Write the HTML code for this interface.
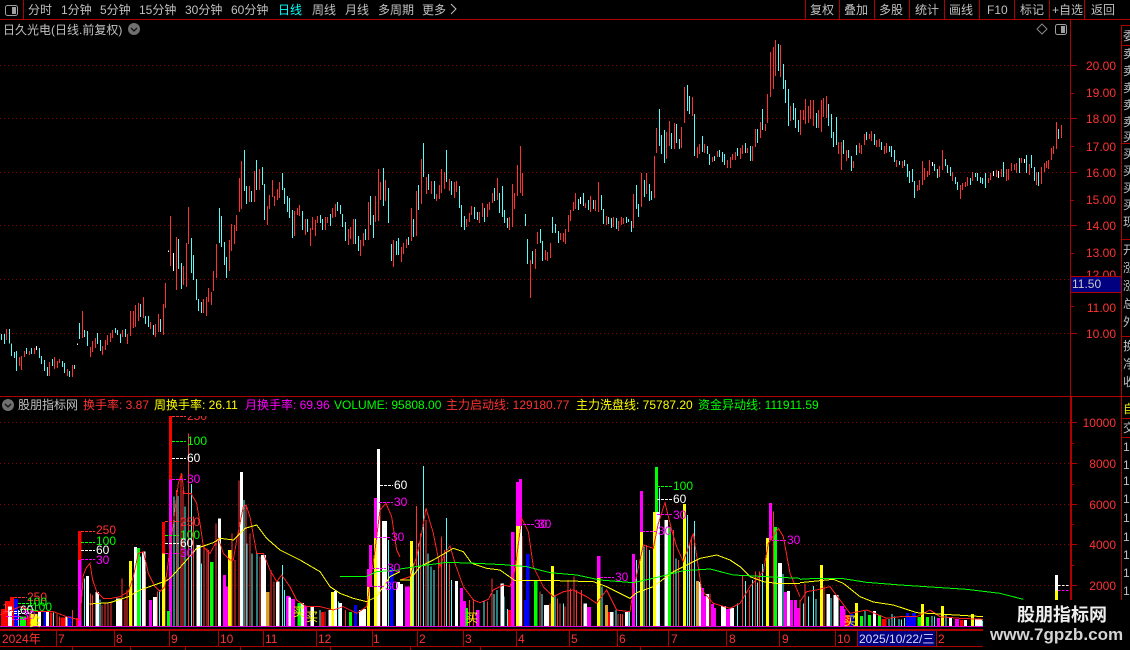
<!DOCTYPE html>
<html><head><meta charset="utf-8"><style>
html,body{margin:0;padding:0;background:#000;width:1130px;height:650px;overflow:hidden}
svg{display:block}
text{font-family:"Liberation Sans","WenQuanYi Zen Hei","Noto Sans CJK SC",sans-serif;font-size:12px;white-space:pre}
.c{shape-rendering:crispEdges}
.l{stroke:#b00000;stroke-width:1;fill:none}
.g{stroke:#8a0000;stroke-width:1;stroke-dasharray:1 3;fill:none}
.t{fill:#c0c0c0}
.ax{fill:#ff3232;text-anchor:end}
.rc{stroke:#ff3232;stroke-width:3;fill:none}
.cc{stroke:#54fcfc;stroke-width:3;fill:none}
.wc{stroke:#fff;stroke-width:3;fill:none}
.cv{fill:none;stroke-width:3}
</style></head><body>
<svg width="1130" height="650" viewBox="0 0 1130 650" xmlns="http://www.w3.org/2000/svg">
<rect width="1130" height="650" fill="#000"/>
<!-- toolbar -->
<g class="t">
<text x="28" y="14">分时</text><text x="61" y="14">1分钟</text><text x="100" y="14">5分钟</text><text x="139" y="14">15分钟</text><text x="185" y="14">30分钟</text><text x="231" y="14">60分钟</text>
<text x="278" y="14" style="fill:#00ffff">日线</text><text x="312" y="14">周线</text><text x="345" y="14">月线</text><text x="378" y="14">多周期</text><text x="422" y="14">更多</text>
<text x="810" y="14">复权</text><text x="844" y="14">叠加</text><text x="879" y="14">多股</text><text x="915" y="14">统计</text><text x="949" y="14">画线</text><text x="987" y="14">F10</text><text x="1020" y="14">标记</text><text x="1052" y="14">+自选</text><text x="1091" y="14">返回</text>
<text x="3" y="34">日久光电(日线.前复权)</text>
</g>
<path d="M451 4L456 9L451 14" fill="none" stroke="#c0c0c0"/>
<g class="c">
<path class="l" d="M0 19.5H1130M23.5 0V19.5M805.5 0V19.5M839.5 0V19.5M874.5 0V19.5M909.5 0V19.5M944.5 0V19.5M979.5 0V19.5M1014.5 0V19.5M1049.5 0V19.5M1084.5 0V19.5M1070.5 20V630M1121.5 25V650M1121 25.5H1130M1121 45.5H1130M1121 143.5H1130M1121 239.5H1130M1121 336.5H1130M0 396.5H1130M1121 418.5H1130M1121 437.5H1130"/>
<path class="g" d="M0 65.5H1069M0 118.5H1069M0 172.5H1069M0 225.5H1069M0 279.5H1069M0 333.5H1069M0 422.5H1069M0 463.5H1069M0 504.5H1069M0 544.5H1069M0 585.5H1069"/>
</g>
<rect x="5.5" y="5.5" width="12" height="10" rx="2" fill="none" stroke="#a0a0a0"/><rect x="12" y="7" width="4" height="7" fill="#a0a0a0"/>
<circle cx="134" cy="29" r="6" fill="#707070"/><path d="M131 28L134 31L137 28" fill="none" stroke="#111" stroke-width="1.3"/>
<path d="M1042 24L1047 29L1042 34L1037 29Z" fill="none" stroke="#8a8a8a"/>
<rect x="1055.5" y="24.5" width="11" height="10" rx="2" fill="none" stroke="#a0a0a0"/><rect x="1061" y="26" width="4" height="7" fill="#a0a0a0"/>
<!-- candles A -->
<g class="c" transform="translate(0,130) scale(.33333)">
<path class="cc" d="M4 612V630M13 612V642M28 597V640M34 640V678M43 666V684M49 663V723M79 654V672M94 654V672M118 654V684M124 678V702M133 690V723M142 711V738M157 687V708M187 693V711M193 699V729M208 723V741M223 705V717M238 579V627M253 600V621M262 603V648M292 609V642M301 630V663M346 594V609M352 600V615M361 612V639M376 597V621M421 522V561M436 558V582M445 558V591M460 585V615M481 567V606M535 327V417M544 399V477M574 324V429M580 375V450M589 447V510M595 507V543M604 516V549M658 234V339M664 258V351M673 336V405M679 381V444M733 60V183M739 168V222M754 183V216M769 90V180M787 111V165M793 162V270M847 129V180M853 174V222M862 198V246M868 204V264M877 240V324M907 243V300M922 267V306M961 255V279M967 267V300M991 252V288M1012 216V243M1021 225V252M1027 252V291M1036 276V333M1066 267V342M1075 318V363M1096 297V330M1111 198V285M1120 255V324M1150 114V228M1165 174V279M1174 342V393M1189 333V375M1195 324V375"/>
<path class="rc" d="M19 597V630M58 681V708M64 678V720M73 663V681M88 663V675M103 654V672M148 696V738M163 681V717M172 693V714M178 687V699M202 717V738M217 705V741M247 543V624M271 651V681M277 633V666M286 624V654M307 648V675M316 630V660M322 615V645M331 609V636M337 600V624M367 600V621M382 612V642M391 543V618M400 543V594M406 525V591M415 519V573M430 501V564M451 576V597M466 582V621M475 552V606M490 522V615M496 459V534M511 258V408M529 321V480M550 408V465M559 339V471M565 231V342M610 507V549M619 501V558M625 474V516M634 486V525M640 423V483M649 342V444M688 330V423M694 282V363M703 285V342M709 255V303M718 144V246M724 93V237M748 168V216M763 123V216M778 117V180M802 228V285M808 195V237M817 150V201M823 198V228M832 177V210M838 156V204M883 243V318M892 234V255M898 225V258M916 267V315M931 294V348M937 261V300M946 270V318M952 258V279M976 261V300M982 261V279M997 234V264M1006 222V261M1045 297V345M1051 291V327M1060 267V342M1081 330V378M1090 309V348M1105 216V330M1126 198V276M1135 117V273M1141 156V210M1156 150V213M1180 330V411"/>
<path class="wc" d="M109 648V660M232 641V645M505 362V366M520 369V423"/>
</g>
<!-- candles B -->
<g class="c" transform="translate(400,70) scale(.33333)">
<path class="cc" d="M25 501V525M40 447V501M55 345V420M70 219V321M85 312V360M103 333V387M139 240V336M154 333V375M178 348V414M184 405V471M193 438V480M223 411V447M232 426V450M253 414V456M283 354V393M298 369V429M307 348V441M313 420V459M322 444V474M376 432V468M382 507V582M397 543V582M421 477V519M427 513V573M457 441V489M466 462V489M475 483V519M535 387V420M550 369V408M565 390V420M580 390V417M604 375V420M610 417V462M625 441V462M634 444V474M649 444V477M679 441V459M685 447V456M694 453V486M709 345V417M715 402V441M733 330V381M748 342V393M754 363V390M778 117V228M784 195V252M793 180V279M814 189V237M829 162V219M838 207V237M862 45V123M868 78V132M883 132V258M907 198V246M922 228V252M928 252V285M943 258V273M958 240V261M967 246V276M973 252V285M1012 234V258M1036 219V249"/>
<path class="rc" d="M4 531V576M10 519V552M19 507V534M34 414V513M49 363V498M64 267V402M79 321V372M94 333V372M109 372V393M118 345V387M124 297V369M133 306V357M148 327V363M163 336V384M169 333V366M199 447V471M208 429V456M214 408V435M238 426V459M247 399V441M262 402V441M268 396V420M277 369V399M292 324V390M328 441V480M337 342V471M343 369V417M352 285V378M361 228V369M367 309V378M391 570V684M406 537V597M412 486V522M436 540V570M442 546V573M451 519V564M481 489V510M490 489V516M496 477V522M505 435V486M511 420V453M520 396V423M526 369V417M556 399V414M571 378V426M586 390V423M595 336V426M619 438V465M640 441V471M655 453V483M664 441V465M670 444V462M700 372V474M724 309V411M739 309V372M763 258V384M769 174V249M799 186V267M808 153V228M823 159V237M844 171V234M853 51V159M877 81V138M892 231V264M898 222V252M913 222V249M937 261V276M952 243V261M982 270V294M991 261V294M997 252V270M1006 246V270M1021 234V267M1027 225V252M1042 234V249"/>
<path class="wc" d="M541 381V402"/>
</g>
<!-- candles C -->
<g class="c" transform="translate(740,30) scale(.33333)">
<path class="cc" d="M31 348V393M52 297V339M67 237V300M115 42V123M130 102V177M136 150V219M145 177V288M160 219V270M166 234V294M175 270V306M229 249V294M265 222V288M274 252V324M280 306V351M289 261V345M310 330V372M325 360V384M334 378V423M349 345V375M379 306V330M403 312V345M424 336V360M448 348V366M454 348V381M463 360V396M478 393V405M493 390V408M502 402V441M508 423V459M517 417V456M523 453V504M583 402V423M592 417V444M616 387V408M622 405V429M631 411V438M646 441V462M652 456V480M691 444V465M706 429V441M712 429V453M721 441V459M727 444V462M736 429V474M790 396V441M838 384V429M859 375V429M874 375V414M883 411V453M895 426V468M955 297V327"/>
<path class="rc" d="M37 348V393M46 297V351M61 276V324M76 282V303M82 192V279M91 66V201M100 51V177M106 30V138M121 45V141M151 228V273M181 240V315M190 240V270M196 207V282M205 228V279M211 210V267M220 210V288M235 240V294M244 210V306M250 204V261M259 198V264M295 336V372M304 336V420M319 360V393M340 393V414M358 339V369M364 345V372M373 312V345M388 312V327M394 303V333M409 330V351M418 327V351M433 348V372M439 339V369M469 390V411M487 393V414M532 465V483M538 450V480M547 393V465M553 414V450M562 423V441M568 390V435M598 408V441M607 360V420M637 426V453M661 465V507M667 459V480M676 456V471M682 441V468M697 426V453M745 444V459M751 429V450M769 420V441M784 417V441M799 417V453M805 417V450M814 399V423M823 402V420M829 399V429M844 384V399M868 402V435M889 426V465M904 411V462M913 399V426M919 393V414M925 390V417M934 354V390M940 348V372M949 276V357M964 285V324"/>
<path class="wc" d="M577 396V408M760 423V438M775 423V444M853 387V399"/>
</g>
<!-- price axis -->
<g class="c"><path class="l" d="M1071 65.5H1077M1071 93.5H1074M1071 118.5H1077M1071 146.5H1074M1071 172.5H1077M1071 200.5H1074M1071 225.5H1077M1071 253.5H1074M1071 306.5H1074M1071 333.5H1077"/></g>
<g class="ax"><text x="1116" y="70">20.00</text><text x="1116" y="97">19.00</text><text x="1116" y="123">18.00</text><text x="1116" y="151">17.00</text><text x="1116" y="177">16.00</text><text x="1116" y="204">15.00</text><text x="1116" y="230">14.00</text><text x="1116" y="257">13.00</text><text x="1116" y="279">12.00</text><text x="1116" y="312">11.00</text><text x="1116" y="338">10.00</text></g>
<rect x="1070.5" y="276.5" width="51" height="16" fill="#000080" stroke="#b00000" class="c"/>
<text x="1072" y="288" fill="#c8c8c8">11.50</text>
<!-- right column -->
<g class="t">
<text x="1123" y="40">委</text><text x="1123" y="58">卖</text><text x="1123" y="75">卖</text><text x="1123" y="92">卖</text><text x="1123" y="109">卖</text><text x="1123" y="126">卖</text><text x="1123" y="141">买</text><text x="1123" y="158">买</text><text x="1123" y="175">买</text><text x="1123" y="192">买</text><text x="1123" y="209">买</text><text x="1123" y="226">现</text><text x="1123" y="254">开</text><text x="1123" y="272">涨</text><text x="1123" y="290">涨</text><text x="1123" y="308">总</text><text x="1123" y="326">外</text><text x="1123" y="350">换</text><text x="1123" y="368">净</text><text x="1123" y="386">收</text>
<text x="1123" y="413" style="fill:#e8e800">自</text><text x="1123" y="432">交</text>
<text x="1123" y="451">1</text><text x="1123" y="469">1</text><text x="1123" y="485">1</text><text x="1123" y="503">1</text><text x="1123" y="522">1</text><text x="1123" y="541">1</text><text x="1123" y="559">1</text><text x="1123" y="577">1</text><text x="1123" y="595">1</text>
</g>
<!-- legend -->
<circle cx="8" cy="405" r="6" fill="#707070"/><path d="M5 404L8 407L11 404" fill="none" stroke="#111" stroke-width="1.3"/>
<text x="18" y="409" fill="#c0c0c0">股朋指标网</text>
<text x="83" y="409" fill="#ff3232">换手率: 3.87</text>
<text x="154" y="409" fill="#ffff00">周换手率: 26.11</text>
<text x="245" y="409" fill="#ff00ff">月换手率: 69.96</text>
<text x="334" y="409" fill="#00ff00">VOLUME: 95808.00</text>
<text x="446" y="409" fill="#ff3232">主力启动线: 129180.77</text>
<text x="576" y="409" fill="#ffff00">主力洗盘线: 75787.20</text>
<text x="698" y="409" fill="#00ff00">资金异动线: 111911.59</text>
<!-- volume axis -->
<g class="c"><path stroke="#b00000" stroke-width="2" fill="none" d="M1071 397V630"/><path class="l" d="M1071 422.5H1077M1071 443.5H1074M1071 463.5H1077M1071 484.5H1074M1071 504.5H1077M1071 524.5H1074M1071 544.5H1077M1071 565.5H1074M1071 585.5H1077"/></g>
<g class="ax"><text x="1116" y="427">10000</text><text x="1116" y="468">8000</text><text x="1116" y="509">6000</text><text x="1116" y="549">4000</text><text x="1116" y="590">2000</text></g>
<!-- volume bars Z3 -->
<g class="c" transform="translate(0,390) scale(.33333)">
<path class="cc" d="M4 675V709M13 672V709M55 660V709M160 668V709M253 565V709M300 628V709M421 500V709M478 600V709M522 320V709M534 318V709M555 350V709M574 282V709M604 520V709M732 330V709M741 460V709M756 490V709M771 490V709M847 525V709M853 600V709M960 660V709M1015 635V709M1165 450V709"/>
<path class="rc" d="M171 672V709M178 680V709M218 660V709M271 610V709M277 615V709M306 645V709M315 640V709M324 640V709M333 635V709M366 565V709M375 630V709M381 600V709M396 565V709M436 545V709M472 605V709M495 560V709M529 300V709M543 250V709M549 300V709M565 130V709M581 380V709M612 470V709M621 475V709M626 480V709M648 400V709M696 430V709M705 510V709M717 272V709M738 345V709M750 430V709M780 500V709M813 540V709M822 575V709M975 665V709M1036 660V709M1140 340V709"/>
<path fill="#ff0000" d="M3 657H15V709H3ZM15 633H30V709H15ZM30 621H42V709H30ZM80 680H100V709H80ZM150 668H158V709H150ZM182 682H196V709H182ZM228 684H237V709H228ZM234 423H244V510H234ZM486 396H495V491H486ZM507 78H516V268H507ZM963 666H972V709H963Z"/>
<path fill="#ff00ff" d="M234 510H244V709H234ZM447 630H456V709H447ZM507 268H516V709H507ZM669 555H678V709H669ZM678 590H684V709H678ZM858 618H870V709H858ZM873 627H885V709H873ZM912 648H921V709H912ZM1101 537H1110V591H1101ZM1107 465H1116V591H1107ZM1122 324H1131V444H1122Z"/>
<path fill="#ffff00" d="M387 513H396V709H387ZM486 491H495V709H486ZM684 480H694V709H684ZM993 606H1002V709H993ZM1101 591H1110V709H1101ZM1122 444H1131V709H1122ZM92 672H112V709H92Z"/>
<path fill="#fff" d="M24 650H36V709H24ZM114 666H123V709H114ZM138 665H147V709H138ZM196 680H202V709H196ZM258 558H267V709H258ZM287 606H297V709H287ZM348 625H366V709H348ZM402 471H411V709H402ZM426 485H436V709H426ZM459 621H471V709H459ZM589 465H601V709H589ZM654 385H663V709H654ZM720 246H729V709H720ZM783 495H798V709H783ZM828 575H838V709H828ZM865 622H873V709H865ZM903 639H912V709H903ZM932 648H942V709H932ZM986 660H995V709H986ZM1002 603H1011V709H1002ZM1017 639H1026V709H1017ZM1077 660H1089V709H1077ZM1089 657H1098V709H1089ZM1131 177H1140V709H1131ZM1146 393H1161V709H1146ZM1188 576H1200V709H1188Z"/>
<path fill="#00ff00" d="M60 680H78V709H60ZM411 474H420V709H411ZM501 663H510V709H501ZM630 516H640V709H630ZM893 639H903V709H893ZM1047 666H1056V709H1047Z"/>
<path fill="#0000ff" d="M42 627H54V709H42ZM130 665H138V709H130ZM204 678H214V709H204ZM1062 645H1071V709H1062ZM1170 535H1180V709H1170Z"/>
<path fill="#e0a030" d="M798 606H808V709H798Z"/>
<path class="cv" stroke="#ff2020" d="M0 675L60 650L110 665L160 665L200 680L240 690L250 555L258 535L270 520L278 570L290 605L310 625L335 625L360 620L385 605L400 560L415 490L430 485L445 550L465 590L480 605L495 590L520 400L535 280L545 250L552 310L573 310L590 340L600 400L610 470L630 490L655 445L670 490L690 510L700 510L710 450L730 350L738 345L750 380L770 490L790 490L810 540L830 575L845 555L870 590L890 630L920 650L960 650L1000 660L1030 650L1070 670L1100 650L1125 480L1140 360L1158 340L1175 380L1190 480L1200 500"/>
<path class="cv" stroke="#ffff00" d="M268 642L330 638L385 620L420 600L500 572L515 560L560 510L590 475L640 458L660 445L700 450L735 415L770 405L800 445L840 480L900 510L960 545L990 590L1020 610L1060 625L1100 635L1130 620L1170 560L1200 545"/>
<path class="cv" stroke="#00ff00" d="M1020 559H1100L1130 545L1200 540"/>
</g>
<!-- Z4 -->
<g class="c" transform="translate(400,390) scale(.33333)">
<path class="cc" d="M40 520V709M55 460V709M70 228V709M84 490V709M93 530V709M102 540V709M139 384V709M154 570V709M252 635V709M282 612V709M291 600V709M312 620V709M322 657V709M426 612V709M465 615V709M490 640V709M606 590V709M648 660V709M688 666V709M709 510V709M732 470V709M748 480V709M778 294V709M828 505V709M862 375V709M868 460V709M883 393V709M1012 640V709M1036 573V709M1057 570V709M1072 578V709M1087 522V709M1149 552V709"/>
<path class="rc" d="M50 348V709M62 430V709M78 390V709M116 500V709M124 440V709M133 480V709M148 520V709M208 630V709M220 627V709M262 635V709M276 565V709M342 515V709M366 438V709M420 605V709M450 640V709M472 625V709M480 640V709M495 650V709M504 570V709M512 595V709M522 560V709M530 600V709M545 600V709M654 672V709M661 672V709M668 672V709M740 465V709M820 420V709M835 510V709M875 440V709M930 610V709M1027 558V709M1048 600V709M1066 545V709M1078 545V709M1120 365V709"/>
<path fill="#ff0000" d="M324 660H333V709H324ZM624 666H630V709H624Z"/>
<path fill="#ff00ff" d="M15 590H30V709H15ZM180 594H189V709H180ZM189 633H198V709H189ZM228 660H238V709H228ZM333 426H343V709H333ZM348 276H357V408H348ZM357 267H366V408H357ZM561 651H573V709H561ZM591 498H601V564H591ZM696 492H705V709H696ZM720 303H729V426H720ZM903 594H912V709H903ZM912 618H918V709H912ZM933 642H942V709H933ZM942 654H948V709H942ZM978 657H990V709H978ZM1107 339H1116V450H1107ZM1152 606H1161V709H1152ZM1170 630H1179V709H1170ZM1182 630H1191V709H1182ZM1191 654H1200V709H1191Z"/>
<path fill="#ffff00" d="M30 453H39V709H30ZM348 408H357V709H348ZM453 528H462V709H453ZM591 564H601V709H591ZM720 426H729V709H720ZM759 366H768V709H759ZM849 342H858V709H849ZM1098 444H1107V709H1098Z"/>
<path fill="#fff" d="M0 582H9V709H0ZM165 573H174V709H165ZM302 580H312V709H302ZM357 408H366V709H357ZM432 645H447V709H432ZM550 640H561V709H550ZM630 666H640V709H630ZM675 666H685V709H675ZM768 366H778V709H768ZM793 390H804V709H793ZM897 576H903V709H897ZM918 612H927V709H918ZM963 648H978V709H963ZM990 654H1002V709H990ZM1134 519H1146V709H1134ZM1161 603H1170V709H1161Z"/>
<path fill="#00ff00" d="M196 654H204V709H196ZM402 573H412V709H402ZM765 231H774V366H765ZM804 411H813V709H804ZM1122 411H1131V709H1122Z"/>
<path fill="#0000ff" d="M372 630H388V709H372ZM378 492H388V630H378Z"/>
<path fill="#e0a030" d="M615 645H624V709H615ZM888 573H897V709H888Z"/>
<path class="cv" stroke="#ff2020" d="M0 570L30 560L50 500L65 430L78 355L100 430L120 530L135 490L150 468L165 520L190 590L220 630L240 638L265 628L280 600L310 585L330 590L345 540L365 385L385 425L400 530L430 590L460 620L490 605L520 600L560 620L590 640L620 600L650 660L690 665L700 600L730 465L760 475L775 400L795 338L815 420L830 470L850 515L880 430L905 600L940 640L990 655L1020 640L1050 590L1090 545L1105 460L1135 415L1150 440L1170 550L1200 620"/>
<path class="cv" stroke="#ffff00" d="M0 570L30 570L60 530L100 510L160 475L190 485L215 520L260 535L300 540L345 572L470 572L580 575L620 590L690 625L710 608L760 590L820 545L900 505L950 495L990 510L1020 530L1050 560L1090 575L1130 580L1200 580"/>
<path class="cv" stroke="#00ff00" d="M0 537L60 528L140 517L230 520L310 524L380 530L450 548L530 555L600 570L700 578L780 560L850 542L930 537L1000 555L1100 560L1200 565"/>
</g>
<!-- Z5 -->
<g class="c" transform="translate(800,390) scale(.33333)">
<path class="cc" d="M10 640V709M25 620V709M40 588V709M48 627V709M93 624V709M195 660V709M267 687V709M276 672V709M284 680V709M297 687V709M305 689V709M313 684V709M396 678V709M404 680V709M438 675V709M548 692V709"/>
<path class="rc" d="M0 630V709M15 580V709M72 590V709"/>
<path fill="#ff0000" d="M245 687H260V709H245ZM480 690H490V709H480ZM135 675H150V709H135Z"/>
<path fill="#ff00ff" d="M120 648H132V709H120ZM132 657H136V709H132ZM411 684H420V709H411ZM465 687H477V709H465Z"/>
<path fill="#ffff00" d="M60 525H69V709H60ZM165 639H174V709H165ZM363 642H372V709H363ZM423 648H432V709H423ZM513 672H522V709H513ZM765 602H774V630H765Z"/>
<path fill="#fff" d="M79 612H90V709H79ZM100 615H116V709H100ZM219 663H228V709H219ZM447 681H456V709H447ZM492 690H501V709H492ZM525 687H546V709H525ZM765 555H774V602H765Z"/>
<path fill="#00ff00" d="M180 678H189V709H180ZM204 675H213V709H204ZM234 675H243V709H234ZM352 681H363V709H352ZM378 681H387V709H378Z"/>
<path fill="#0000ff" d="M150 672H160V709H150ZM318 669H327V709H318ZM327 678H336V709H327ZM336 669H348V709H336Z"/>
<path class="cv" stroke="#ff2020" d="M0 635L20 605L50 600L90 590L120 630L150 670L200 660L260 685L300 680L350 680L390 660L420 680L480 685L550 688"/>
<path class="cv" stroke="#ffff00" d="M0 578L100 568L130 580L180 620L220 636L280 645L350 668L550 680"/>
<path class="cv" stroke="#00ff00" d="M0 568L50 565L130 566L200 577L300 585L500 598L600 610L670 628"/>
<path stroke="#fff" stroke-width="3" stroke-dasharray="8 4" d="M774 586H810"/><path stroke="#ff00ff" stroke-width="3" stroke-dasharray="8 4" d="M774 601H810"/>
</g>
<!-- baseline and dates -->
<g class="c"><path stroke="#e000e0" fill="none" d="M0 626.5H1069"/>
<path stroke="#b00000" stroke-width="2" fill="none" d="M0 630H985"/>
<path class="l" d="M0 646.5H985M56.5 631V646M114.5 631V646M169.5 631V646M218.5 631V646M263.5 631V646M316.5 631V646M372.5 631V646M417.5 631V646M463.5 631V646M516.5 631V646M569.5 631V646M617.5 631V646M668.5 631V646M726.5 631V646M779.5 631V646M835.5 631V646M857.5 631V646M936.5 631V646M72.5 647V650M130.5 647V650M185.5 647V650M240.5 647V650M330.5 647V650M410.5 647V650M480.5 647V650M640.5 647V650"/></g>
<rect x="858" y="631" width="77" height="15" fill="#000080"/>
<g fill="#ff3232"><text x="2" y="643">2024年</text><text x="58" y="643">7</text><text x="116" y="643">8</text><text x="171" y="643">9</text><text x="220" y="643">10</text><text x="265" y="643">11</text><text x="318" y="643">12</text><text x="373" y="643">1</text><text x="419" y="643">2</text><text x="465" y="643">3</text><text x="518" y="643">4</text><text x="571" y="643">5</text><text x="619" y="643">6</text><text x="671" y="643">7</text><text x="729" y="643">8</text><text x="782" y="643">9</text><text x="837" y="643">10</text><text x="938" y="643">2</text></g>
<text x="859" y="643" fill="#d8d8ff">2025/10/22/三</text>
<!-- labels -->
<defs><clipPath id="cp"><rect x="0" y="416" width="1069" height="214"/></clipPath></defs>
<g clip-path="url(#cp)">
<g class="c" fill="none">
<path stroke="#ff3232" stroke-dasharray="3 1" d="M81 531.5H95M165 521.5H179M172 416.5H186M14 597.5H27"/>
<path stroke="#00ff00" stroke-dasharray="3 1" d="M81 542.5H95M165 535.5H179M172 441.5H186M657 486.5H672M18 603.5H32M20 609.5H34"/>
<path stroke="#fff" stroke-dasharray="3 1" d="M81 550.5H95M165 543.5H179M172 458.5H186M380 485.5H393M657 499.5H672M6 611.5H20M14 613.5H30"/>
<path stroke="#ff00ff" stroke-dasharray="3 1" d="M81 559.5H95M165 553.5H179M172 479.5H186M379 502.5H393M375 537.5H390M372 568.5H386M370 586.5H384M519 524.5H534M600 577.5H614M657 514.5H672M642 531.5H657M772 540.5H786M6 616.5H22M12 619.5H26"/>
</g>
<text x="96" y="534" fill="#ff3232">250</text><text x="96" y="545" fill="#00ff00">100</text><text x="96" y="554" fill="#fff">60</text><text x="96" y="564" fill="#ff00ff">30</text>
<text x="187" y="420" fill="#ff3232">250</text><text x="187" y="445" fill="#00ff00">100</text><text x="187" y="462" fill="#fff">60</text><text x="187" y="483" fill="#ff00ff">30</text>
<text x="180" y="526" fill="#ff3232">250</text><text x="180" y="539" fill="#00ff00">100</text><text x="180" y="547" fill="#fff">60</text><text x="180" y="557" fill="#ff00ff">30</text>
<text x="394" y="489" fill="#fff">60</text><text x="394" y="506" fill="#ff00ff">30</text><text x="391" y="541" fill="#ff00ff">30</text><text x="387" y="572" fill="#ff00ff">30</text><text x="385" y="590" fill="#ff00ff">30</text>
<text x="534" y="528" fill="#ff00ff">30</text><text x="538" y="528" fill="#ff00ff">30</text>
<text x="615" y="581" fill="#ff00ff">30</text><text x="673" y="490" fill="#00ff00">100</text><text x="673" y="503" fill="#fff">60</text><text x="673" y="519" fill="#ff00ff">30</text><text x="658" y="535" fill="#ff00ff">30</text><text x="787" y="544" fill="#ff00ff">30</text>
</g>
<g fill="#ff3232"><text x="27" y="601">250</text></g><g fill="#00ff00"><text x="27" y="606">100</text><text x="32" y="611">100</text></g><g fill="#fff"><text x="20" y="614">60</text></g><g fill="#ff00ff"><text x="22" y="619">30</text></g>
<text x="2" y="612" fill="#ff3232">1</text>
<g fill="#ffff00"><text x="29" y="626">买</text><text x="293" y="616">买</text><text x="306" y="621">买</text><text x="466" y="622">买</text><text x="844" y="625">买</text></g>
<!-- watermark -->
<rect x="983" y="600" width="147" height="50" fill="#000"/>
<text x="1017" y="621" fill="#eee" style="font-size:18px;font-weight:bold">股朋指标网</text>
<text x="990" y="640" fill="#d4d4d4" style="font-size:17px;font-weight:bold;letter-spacing:.05px">www.7gpzb.com</text>
</svg>
</body></html>
